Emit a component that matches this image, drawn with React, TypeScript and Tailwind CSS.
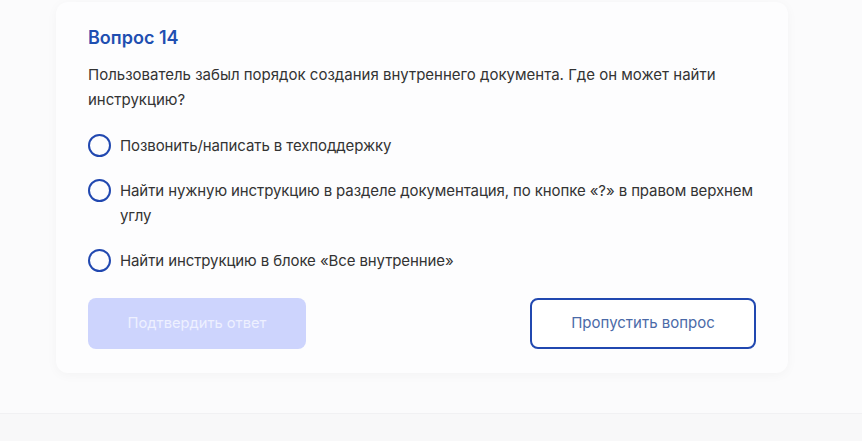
import { useState } from 'react';

const options = [
  'Позвонить/написать в техподдержку',
  'Найти нужную инструкцию в разделе документация, по кнопке «?» в правом верхнем углу',
  'Найти инструкцию в блоке «Все внутренние»',
];

export default function App() {
  const [selected, setSelected] = useState<number | null>(null);

  return (
    <div className="min-h-screen bg-[#fbfbfc] font-['Inter',sans-serif]">
      <div className="h-[413px] pt-[2px] pl-[56px]">
        <div className="w-[732px] rounded-xl bg-[#fdfdfe] px-8 pt-[24px] pb-6 shadow-[0_2px_12px_rgba(0,0,0,0.035)]">
          <h2 className="text-[18px] font-semibold leading-6 text-[#1f4fb1]">Вопрос 14</h2>
          <p className="mt-3 text-[15px] leading-[25px] text-[#333]">
            Пользователь забыл порядок создания внутреннего документа. Где он может найти инструкцию?
          </p>

          <div className="mt-[21px] flex flex-col gap-5">
            {options.map((o, i) => (
              <label key={i} className="flex cursor-pointer items-start gap-[9px]" onClick={() => setSelected(i)}>
                <span className="mt-[1px] flex h-[23px] w-[23px] shrink-0 items-center justify-center rounded-full border-2 border-[#2148b0]">
                  {selected === i && <span className="h-[11px] w-[11px] rounded-full bg-[#2148b0]" />}
                </span>
                <span className="text-[15px] leading-[25px] tracking-[-0.1px] text-[#333]">{o}</span>
              </label>
            ))}
          </div>

          <div className="mt-[25px] flex justify-between">
            <button
              disabled={selected === null}
              className="h-[51px] w-[218px] rounded-lg bg-[#cdd4fd] text-[14.7px] text-[#eef0ff]"
            >
              Подтвердить ответ
            </button>
            <button className="h-[51px] w-[226px] rounded-lg border-2 border-[#2148b0] bg-white text-[15px] text-[#4b6aa8]">
              Пропустить вопрос
            </button>
          </div>
        </div>
      </div>
      <div className="h-[28px] border-t border-[#f1f1f3] bg-[#f8f8f9]" />
    </div>
  );
}
